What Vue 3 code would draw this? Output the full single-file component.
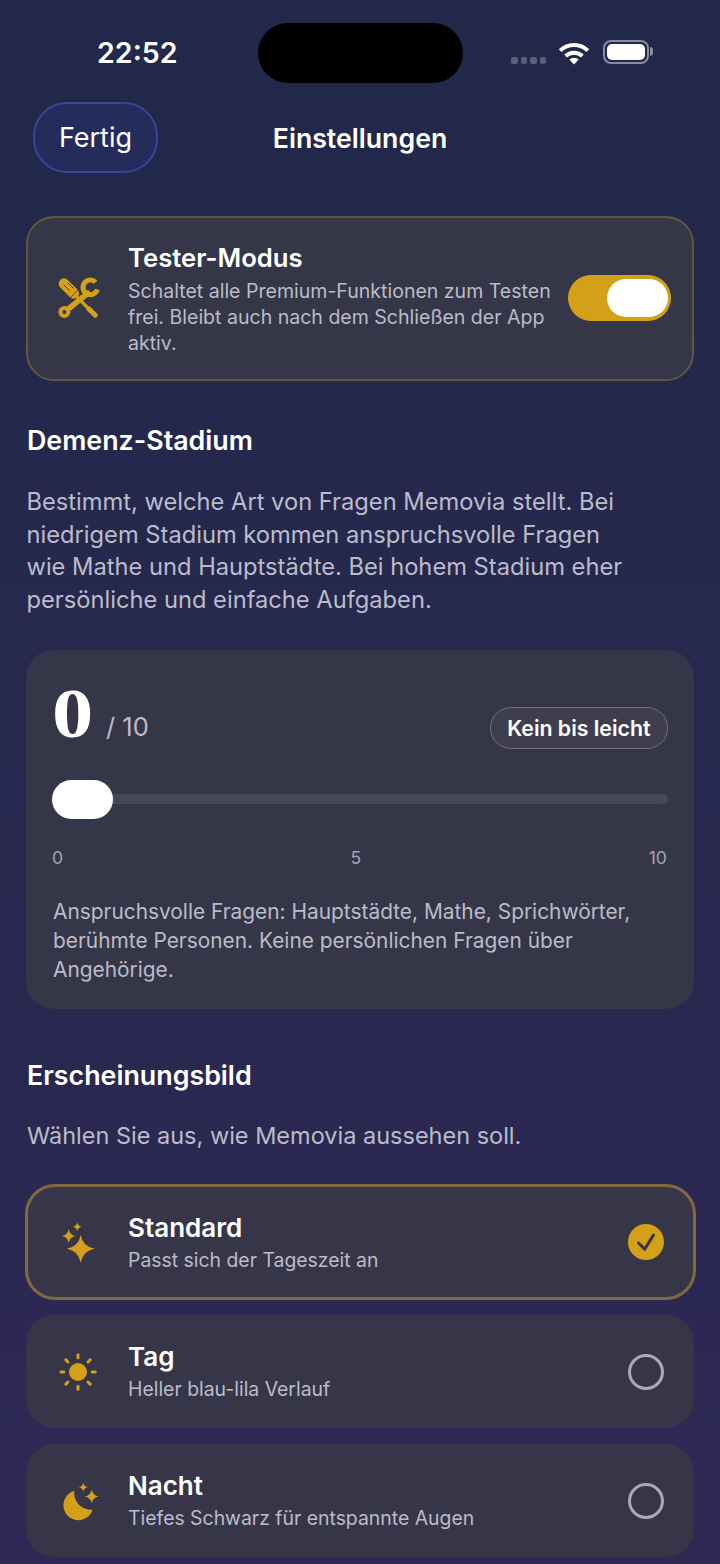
<script setup>
const desc = 'Anspruchsvolle Fragen: Hauptstädte, Mathe, Sprichwörter, berühmte Personen. Keine persönlichen Fragen über Angehörige.'
const ticks = ['0', '5', '10']
const options = [
  { id: 'standard', title: 'Standard', sub: 'Passt sich der Tageszeit an', selected: true },
  { id: 'tag', title: 'Tag', sub: 'Heller blau-lila Verlauf', selected: false },
  { id: 'nacht', title: 'Nacht', sub: 'Tiefes Schwarz für entspannte Augen', selected: false }
]
const rays = [0, 45, 90, 135, 180, 225, 270, 315]
</script>

<template>
  <div class="screen">
    <div class="status">
      <span class="time">22:52</span>
      <div class="island"></div>
      <div class="status-right">
        <div class="dots"><i></i><i></i><i></i><i></i></div>
        <svg class="wifi" viewBox="0 0 32 24" width="32" height="24">
          <path d="M2.2 9.6a20 20 0 0 1 27.6 0" fill="none" stroke="#fff" stroke-width="4" />
          <path d="M7.6 15a12.4 12.4 0 0 1 16.8 0" fill="none" stroke="#fff" stroke-width="4" />
          <path d="M11.3 18.6 a6.6 6.6 0 0 1 9.4 0 L16 23.6z" fill="#fff" />
        </svg>
        <div class="battery"><div class="battery-fill"></div></div>
        <div class="battery-cap"></div>
      </div>
    </div>

    <header class="nav">
      <button class="done">Fertig</button>
      <h1 class="nav-title">Einstellungen</h1>
    </header>

    <section class="card tester">
      <div class="icon-box">
        <svg viewBox="105 198 135 135" width="45" height="45">
          <g fill="none" stroke="#d4a017" stroke-linecap="round">
            <path d="M129 221 L158 250" stroke-width="32" />
            <path d="M165 258 L205 298" stroke-width="10" />
            <path d="M204 297 L223 316" stroke-width="15" />
            <path d="M200 250 L143 296" stroke-width="17" />
            <circle cx="130" cy="306" r="12" stroke-width="12" />
            <path d="M223.600 216.400 A22 22 0 1 0 229 238" stroke-width="15" stroke-linecap="butt" />
          </g>
          <path d="M128 224 L146 242 M141 219 L157 235" stroke="#353648" stroke-width="3" fill="none" />
          <path d="M170 240 L143 268" stroke="#353648" stroke-width="2.500" fill="none" />
        </svg>
      </div>
      <div class="body">
        <div class="opt-title tester-title">Tester-Modus</div>
        <p class="tester-desc">Schaltet alle Premium-Funktionen zum Testen frei. Bleibt auch nach dem Schließen der App aktiv.</p>
      </div>
      <div class="toggle"><div class="toggle-thumb"></div></div>
    </section>

    <h2 class="heading first">Demenz-Stadium</h2>
    <p class="para">Bestimmt, welche Art von Fragen Memovia stellt. Bei niedrigem Stadium kommen anspruchsvolle Fragen wie Mathe und Hauptstädte. Bei hohem Stadium eher persönliche und einfache Aufgaben.</p>

    <section class="card slider-card">
      <div class="score-row">
        <div class="score"><span class="big">0</span><span class="of">/ 10</span></div>
        <span class="chip">Kein bis leicht</span>
      </div>
      <div class="slider"><div class="track"></div><div class="thumb"></div></div>
      <div class="ticks"><span v-for="t in ticks" :key="t">{{ t }}</span></div>
      <p class="slider-desc">{{ desc }}</p>
    </section>

    <h2 class="heading second">Erscheinungsbild</h2>
    <p class="para short">Wählen Sie aus, wie Memovia aussehen soll.</p>

    <div class="options">
      <section v-for="o in options" :key="o.id" class="card option" :class="{ selected: o.selected }">
        <div class="icon-box">
          <svg v-if="o.id === 'standard'" viewBox="0 0 52 52" width="52" height="52" fill="#d4a017">
            <path d="M28.700 18.700 Q30.700 30.700 42.700 32.700 Q30.700 34.700 28.700 46.700 Q26.700 34.700 14.700 32.700 Q26.700 30.700 28.700 18.700Z" />
            <path d="M16.700 13 Q17.700 19 23.700 20 Q17.700 21 16.700 27 Q15.700 21 9.700 20 Q15.700 19 16.700 13Z" />
            <path d="M25.300 6.200 Q26 10 29.800 10.700 Q26 11.400 25.300 15.200 Q24.600 11.400 20.800 10.700 Q24.600 10 25.300 6.200Z" />
          </svg>
          <svg v-else-if="o.id === 'tag'" viewBox="0 0 52 52" width="52" height="52">
            <circle cx="26" cy="26" r="9" fill="#d4a017" />
            <path v-for="r in rays" :key="r" d="M26 11.800 V8.800" stroke="#d4a017" stroke-width="3" stroke-linecap="round" :transform="`rotate(${r} 26 26)`" />
          </svg>
          <svg v-else viewBox="0 0 52 52" width="52" height="52" fill="#d4a017">
            <path d="M22.300 15.800 A15 15 0 1 0 40.700 34.800 A17 17 0 0 1 22.300 15.800Z" />
            <path d="M39.700 14.500 Q40.700 20.500 46.700 21.500 Q40.700 22.500 39.700 28.500 Q38.700 22.500 32.700 21.500 Q38.700 20.500 39.700 14.500Z" />
            <path d="M31.300 7.700 Q32 11.500 35.800 12.200 Q32 12.900 31.300 16.700 Q30.600 12.900 26.800 12.200 Q30.600 11.500 31.300 7.700Z" />
          </svg>
        </div>
        <div class="body">
          <div class="opt-title">{{ o.title }}</div>
          <div class="opt-sub">{{ o.sub }}</div>
        </div>
        <div v-if="o.selected" class="check">
          <svg viewBox="0 0 36 36" width="36" height="36"><path d="M10.500 19 L16.700 25.300 L25.500 11" fill="none" stroke="#353648" stroke-width="3" stroke-linecap="round" stroke-linejoin="round" /></svg>
        </div>
        <div v-else class="radio"></div>
      </section>
    </div>
  </div>
</template>

<style>
html, body { margin: 0; background: #2d2854; }
</style>

<style scoped>
* { box-sizing: border-box; }
.screen {
  width: 720px;
  height: 1564px;
  overflow: hidden;
  padding: 23px 26px 0;
  background: linear-gradient(180deg, #212849 0%, #2e2855 100%);
  font-family: Inter, "Noto Sans", sans-serif;
  color: #fff;
}
.status { position: relative; height: 60px; }
.time {
  position: absolute;
  left: 71px;
  top: 13px;
  font-size: 28.600px;
  line-height: 34px;
  font-weight: 600;
}
.island {
  position: absolute;
  left: 232px;
  top: 0;
  width: 205px;
  height: 60px;
  border-radius: 30px;
  background: #000;
}
.status-right {
  position: absolute;
  left: 485px;
  top: 17px;
  display: flex;
  align-items: flex-start;
}
.dots { display: flex; gap: 3px; margin-top: 17px; width: 47px; }
.dots i { width: 6.500px; height: 6.500px; border-radius: 2px; background: #5a5d78; }
.wifi { margin-right: 13px; margin-top: 1px; }
.battery {
  width: 46px;
  height: 24px;
  border: 2px solid #8a8ca3;
  border-radius: 8px;
  padding: 2px;
}
.battery-fill { width: 100%; height: 100%; background: #fff; border-radius: 5px; }
.battery-cap { width: 3px; height: 9px; margin: 7px 0 0 1px; background: #8a8ca3; border-radius: 0 3px 3px 0; }
.nav { position: relative; display: flex; align-items: center; height: 71px; margin-top: 19px; }
.done {
  margin-left: 7px;
  width: 125px;
  height: 71px;
  border-radius: 34px;
  border: 2px solid #344799;
  background: #252c5c;
  color: #fff;
  font: 400 27px Inter, "Noto Sans", sans-serif;
}
.nav-title {
  position: absolute;
  left: 0;
  right: 0;
  top: 1px;
  margin: 0;
  text-align: center;
  font-size: 26.700px;
  font-weight: 580;
  line-height: 71px;
}
.card { background: #353648; border-radius: 28px; }
.tester {
  display: flex;
  align-items: center;
  height: 165px;
  margin-top: 43px;
  border: 2px solid #62563f;
  padding: 0 21.500px 0 24px;
}
.icon-box { width: 52px; height: 52px; flex: none; display: flex; align-items: center; justify-content: center; margin-right: 24px; }
.body { flex: 1; min-width: 0; }
.opt-title { font-size: 26px; line-height: 32px; font-weight: 580; margin-bottom: 3px; }
.tester-title { font-size: 25.700px; margin-bottom: 4px; }
.tester-desc { margin: 0; width: 432px; font-size: 19.550px; line-height: 26px; color: #bcbcc9; }
.opt-sub { font-size: 19.400px; line-height: 26px; color: #bcbcc9; }
.toggle { width: 103px; height: 46px; flex: none; margin-top: -1px; border-radius: 23px; background: #d4a017; padding: 4px 3px; display: flex; justify-content: flex-end; }
.toggle-thumb { width: 61px; height: 38px; border-radius: 19px; background: #fff; }
.heading { margin: 0; padding-left: 1px; font-size: 26.800px; line-height: 32px; font-weight: 580; }
.heading.first { margin-top: 43px; }
.heading.second { margin-top: 50px; }
.para { margin: 30px 0 0; padding-left: 0.500px; width: 612px; font-size: 23.700px; line-height: 32.700px; color: #bcbcc9; }
.para.short { margin-top: 29.500px; padding-left: 1px; font-size: 23.500px; }
.slider-card { height: 359px; margin-top: 33px; padding: 0 26px; }
.score-row { display: flex; align-items: flex-start; justify-content: space-between; height: 130px; }
.score { display: flex; align-items: baseline; }
.big { display: inline-block; font: 700 70px/1 "Liberation Serif", serif; margin: 29px 5px 0 0; transform: scaleX(1.18); transform-origin: left center; }
.of { font-size: 25.500px; margin-left: 14px; position: relative; top: -1px; color: #bcbcc9; }
.chip {
  margin-top: 57px;
  height: 42px;
  padding: 0 16.500px;
  display: flex;
  align-items: center;
  border-radius: 21px;
  border: 1.500px solid #71717f;
  background: #3e3e4e;
  font-size: 21.300px;
  font-weight: 580;
}
.slider { position: relative; height: 39px; }
.track { position: absolute; left: 0; right: 0; top: 14px; height: 10px; border-radius: 5px; background: #464757; }
.thumb { position: absolute; left: 0; top: 0; width: 61px; height: 39px; border-radius: 20px; background: #fff; }
.ticks { display: flex; justify-content: space-between; margin-top: 28px; padding-right: 1px; font-size: 17.600px; line-height: 21px; color: #a4a4b3; }
.slider-desc { margin: 29px 0 0 1px; font-size: 20.880px; line-height: 29px; color: #bcbcc9; }
.options { display: flex; flex-direction: column; gap: 16px; margin-top: 32px; }
.option { display: flex; align-items: center; height: 113px; padding: 0 30px 0 26px; background: #373649; }
.option.selected { height: 116px; margin: -1px -1.500px; border: 3px solid #80693e; border-radius: 30px; padding: 0 28.500px 0 24.500px; }
.radio { width: 36px; height: 36px; flex: none; border-radius: 50%; border: 3px solid #a9a9b8; }
.check { width: 36px; height: 36px; flex: none; border-radius: 50%; background: #d4a017; }
.check svg { display: block; }
</style>
